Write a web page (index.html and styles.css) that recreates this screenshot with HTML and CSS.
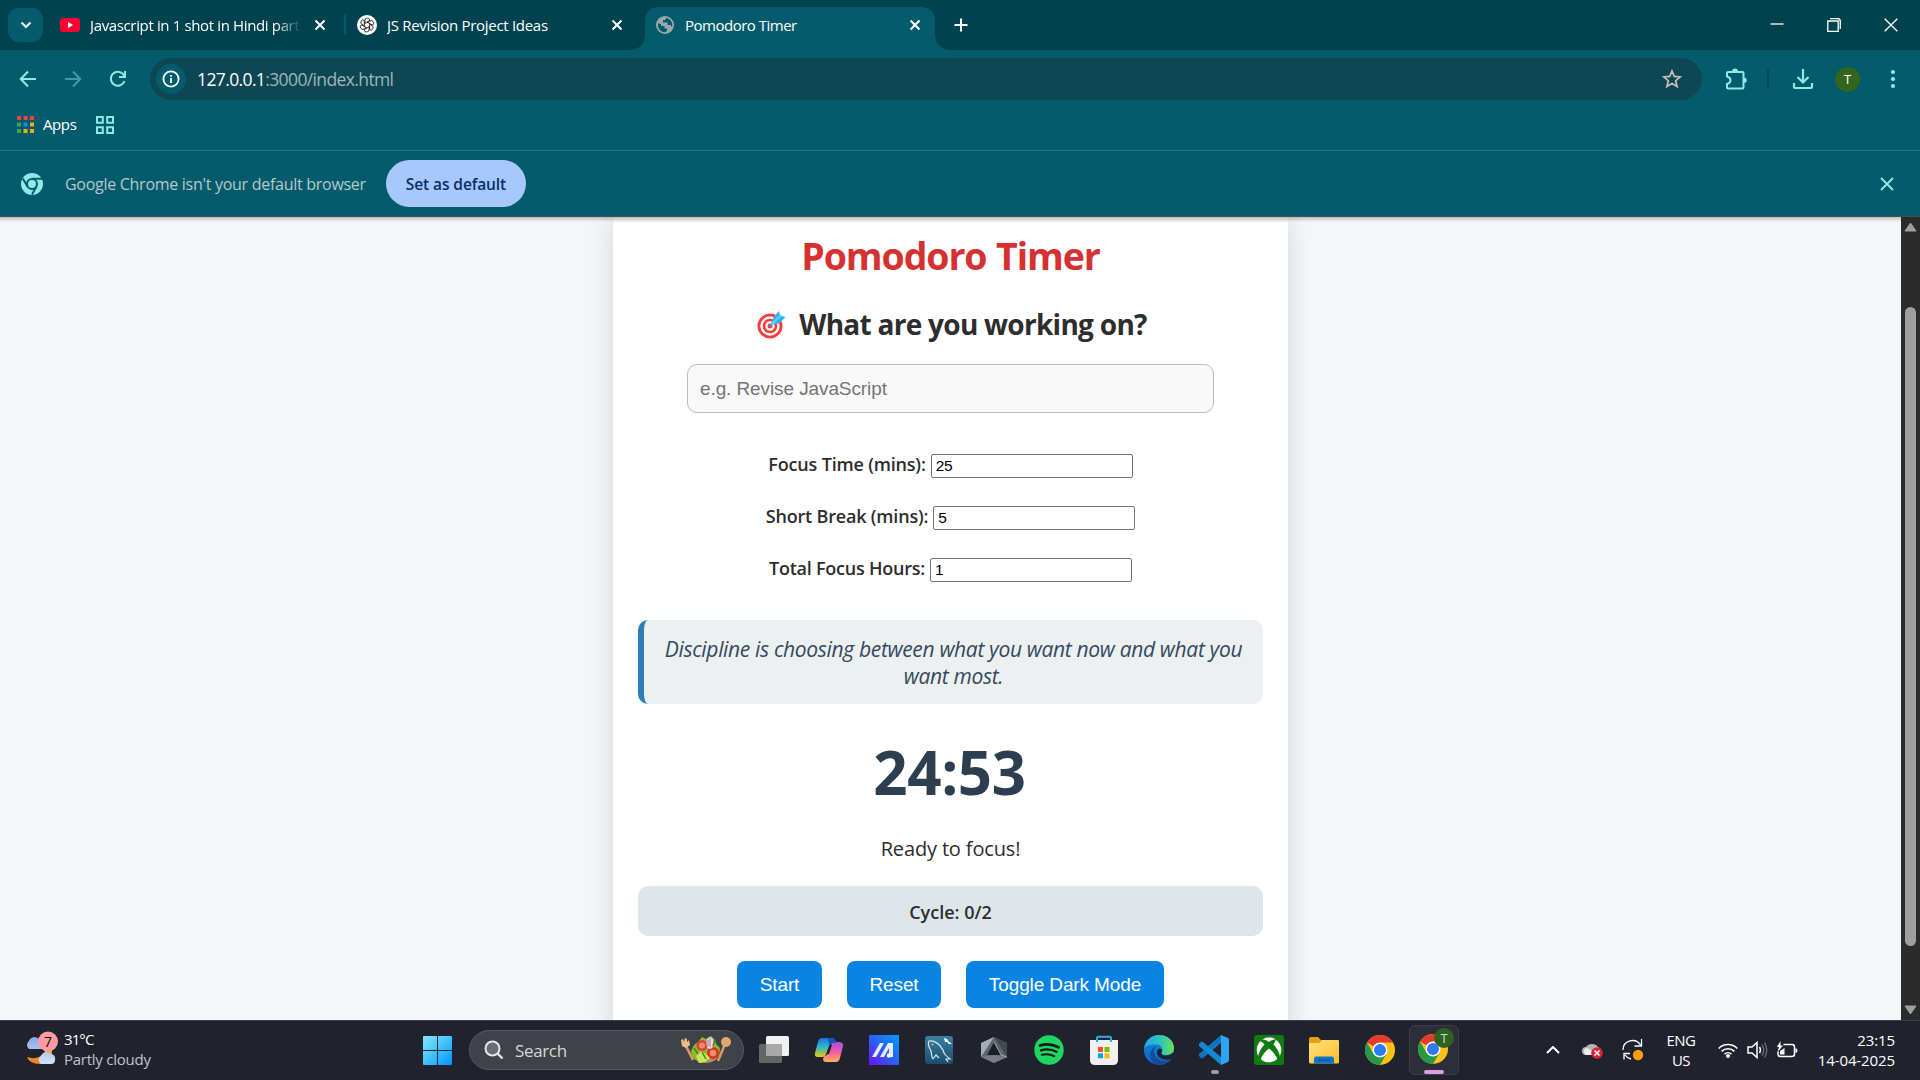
FILE: index.html
```html
<!DOCTYPE html>
<html lang="en">
<head>
<meta charset="utf-8">
<title>Pomodoro Timer</title>
<link rel="stylesheet" href="styles.css">
</head>
<body>
<header class="tabstrip">
  <div class="tab-search"><svg width="12" height="8" viewBox="0 0 12 8"><path d="M1.500 1.500 6 6l4.500-4.500" fill="none" stroke="#fff" stroke-width="2.200"/></svg></div>
  <div class="tab tab-one">
    <svg width="20" height="16" viewBox="0 0 20 16"><rect y="1" width="20" height="14" rx="3.500" fill="#ff0033"/><path d="M8 5v6l5-3z" fill="#fff"/></svg>
    <span class="tab-title fade">Javascript in 1 shot in Hindi part</span>
    <svg class="x" width="12" height="12" viewBox="0 0 12 12"><path d="M1.500 1.500l9 9M10.500 1.500l-9 9"/></svg>
  </div>
  <i class="tab-sep"></i>
  <div class="tab tab-two">
    <svg width="20" height="20" viewBox="0 0 20 20"><circle cx="10" cy="10" r="10" fill="#fff"/><g fill="none" stroke="#222" stroke-width=".85"><g id="petal"><path d="M8 9V5.500Q8 3 10.300 3T13 5.200L8.200 8"/></g><use href="#petal" transform="rotate(60 10 10)"/><use href="#petal" transform="rotate(120 10 10)"/><use href="#petal" transform="rotate(180 10 10)"/><use href="#petal" transform="rotate(240 10 10)"/><use href="#petal" transform="rotate(300 10 10)"/></g></svg>
    <span class="tab-title">JS Revision Project Ideas</span>
    <svg class="x" width="12" height="12" viewBox="0 0 12 12"><path d="M1.500 1.500l9 9M10.500 1.500l-9 9"/></svg>
  </div>
  <div class="tab active">
    <svg width="18" height="18" viewBox="0 0 18 18"><circle cx="9" cy="9" r="9" fill="#9aa8ae"/><path d="M2 7.500c3 0 3.500 1.200 3.200 2.500h3.300v2.500H11V15l-2 1.300C4.500 16.300 1.500 12.500 2 7.500zM9.500 2v2H7v2.500h4.500V9H15v1.500h1.200C17 6 13.500 2 9.500 2z" fill="#035b6c"/></svg>
    <span class="tab-title">Pomodoro Timer</span>
    <svg class="x" width="12" height="12" viewBox="0 0 12 12"><path d="M1.500 1.500l9 9M10.500 1.500l-9 9"/></svg>
  </div>
  <svg class="plus" width="14" height="14" viewBox="0 0 14 14"><path d="M7 .5v13M.5 7h13" stroke="#fff" stroke-width="2"/></svg>
  <div class="win">
    <svg width="14" height="14" viewBox="0 0 14 14"><path d="M.5 6h13"/></svg>
    <svg width="14" height="14" viewBox="0 0 14 14"><path d="M.8 3h10.400v10.300H.8zM3 .6h7.500q2.800 0 2.800 2.800V11"/></svg>
    <svg width="14" height="14" viewBox="0 0 14 14"><path d="M.7.7l12.600 12.600M13.300.7.7 13.300"/></svg>
  </div>
</header>

<nav class="toolbar">
  <svg class="nav" width="18" height="18" viewBox="0 0 18 18"><path d="M17 9H2M9 1.500 1.700 9 9 16.500"/></svg>
  <svg class="nav dim" width="18" height="18" viewBox="0 0 18 18"><path d="M1 9h15M9 1.500 16.300 9 9 16.500"/></svg>
  <svg class="nav" width="18" height="18" viewBox="0 0 18 18"><path d="M15.500 11A7 7 0 1 1 14 4l1.800 2.500M16 1v6h-6"/></svg>
  <div class="omnibox">
    <span class="info"><svg width="18" height="18" viewBox="0 0 18 18"><circle cx="9" cy="9" r="7.600" fill="none" stroke="#fff" stroke-width="1.800"/><path d="M9 8v5M9 5v1.800" stroke="#fff" stroke-width="1.800"/></svg></span>
    <span class="url"><b>127.0.0.1</b>:3000/index.html</span>
    <svg class="star" width="20" height="20" viewBox="0 0 20 20"><path d="M10 2l2.300 5.400 5.900.5-4.500 3.800 1.400 5.800-5.100-3.100-5.100 3.100 1.400-5.800L1.800 7.900l5.900-.5z" fill="none" stroke="#c9bdbd" stroke-width="1.700"/></svg>
  </div>
  <svg class="ext" width="22" height="22" viewBox="0 0 22 22"><path d="M3 4h14.500q1 0 1 1v14.500q0 1-1 1H3q-1 0-1-1V16c2-.5 3.500-1.800 3.500-3.700S4 9 2 8.500V5q0-1 1-1z" fill="none" stroke="#8feae7" stroke-width="2"/><path d="M7 3.500a3 3 0 0 1 6 0zM19 9.500a2.700 2.700 0 0 1 0 5.400z" fill="#8feae7"/></svg>
  <i class="tb-sep"></i>
  <svg class="dl" width="22" height="22" viewBox="0 0 22 22"><path d="M11 1v13M5.500 9l5.500 5.500L16.500 9M2 15v3.500q0 1.500 1.500 1.500h15q1.500 0 1.500-1.500V15" fill="none" stroke="#8feae7" stroke-width="2.200"/></svg>
  <span class="avatar">T</span>
  <svg class="dots" width="6" height="20" viewBox="0 0 6 20"><g fill="#8feae7"><circle cx="3" cy="3" r="2.100"/><circle cx="3" cy="10" r="2.100"/><circle cx="3" cy="17" r="2.100"/></g></svg>
</nav>

<div class="bookmarks">
  <svg width="17" height="17" viewBox="0 0 17 17"><path d="M0 0h4v4H0zM6.500 0h4v4h-4zM13 0h4v4h-4z" fill="#f04438"/><path d="M0 6.500h4v4H0zM0 13h4v4H0z" fill="#34a853"/><path d="M6.500 6.500h4v4h-4z" fill="#1a8cff"/><path d="M13 6.500h4v4h-4zM6.500 13h4v4h-4zM13 13h4v4h-4z" fill="#fbab05"/></svg>
  <span>Apps</span>
  <svg width="18" height="18" viewBox="0 0 18 18"><path d="M1 1h5.800v5.800H1zM11.200 1H17v5.800h-5.800zM1 11.200h5.800V17H1zM11.200 11.200H17V17h-5.800z" fill="none" stroke="#8feae7" stroke-width="2"/></svg>
</div>

<div class="infobar">
  <svg width="22" height="22" viewBox="0 0 22 22"><circle cx="11" cy="11" r="11" fill="#8feae7"/><circle cx="11" cy="11" r="5" fill="none" stroke="#035b6c" stroke-width="2"/><path d="M11 5.700h10M6.500 13.500 1.800 5.500M15.500 13.500 11 21.500" stroke="#035b6c" stroke-width="2"/></svg>
  <span class="msg">Google Chrome isn't your default browser</span>
  <span class="set">Set as default</span>
  <svg class="close" width="14" height="14" viewBox="0 0 14 14"><path d="M1 1l12 12M13 1 1 13" stroke="#8feae7" stroke-width="1.900"/></svg>
</div>

<div class="viewport">
  <div class="page">
    <main class="card">
      <h1>Pomodoro Timer</h1>
      <h2><svg width="29" height="29" viewBox="0 0 29 29"><circle cx="13" cy="16" r="12.500" fill="#fa3c3c"/><circle cx="13" cy="16" r="9.700" fill="#fff"/><circle cx="13" cy="16" r="7.300" fill="#fa3c3c"/><circle cx="13" cy="16" r="4.700" fill="#fff"/><circle cx="13" cy="16" r="2.500" fill="#fa3c3c"/><path d="M13 16 20 8" stroke="#1fb7ea" stroke-width="2"/><path d="M14.500 14.500 16 8l6-7 1 4.500L28.500 7l-6.500 6.500z" fill="#35aef3"/><path d="M15 14l9-9" stroke="#5ad6ff" stroke-width="2"/></svg><span>What are you working on?</span></h2>
      <div class="task">e.g. Revise JavaScript</div>
      <div class="field"><label>Focus Time (mins):</label><span class="num">25</span></div>
      <div class="field"><label>Short Break (mins):</label><span class="num">5</span></div>
      <div class="field hours"><label>Total Focus Hours:</label><span class="num">1</span></div>
      <blockquote><span>Discipline is choosing between what you want now and what you</span><br><span>want most.</span></blockquote>
      <div class="timer">24:53</div>
      <div class="status">Ready to focus!</div>
      <div class="cycle">Cycle: 0/2</div>
      <div class="buttons"><span class="btn b1">Start</span><span class="btn b2">Reset</span><span class="btn b3">Toggle Dark Mode</span></div>
    </main>
  </div>
  <aside class="scroll">
    <svg width="13" height="10" viewBox="0 0 13 10"><path d="M6.500 1 12 9H1z" fill="#9f9f9f" stroke="#9f9f9f" stroke-linejoin="round"/></svg>
    <i class="thumb"></i>
    <svg width="13" height="10" viewBox="0 0 13 10"><path d="M6.500 9 12 1H1z" fill="#9f9f9f" stroke="#9f9f9f" stroke-linejoin="round"/></svg>
  </aside>
</div>

<footer class="taskbar">
  <div class="weather">
    <svg width="36" height="36" viewBox="0 0 36 36"><defs><linearGradient id="cl" x2="0" y2="1"><stop stop-color="#88a8e8"/><stop offset="1" stop-color="#d5e2fa"/></linearGradient><linearGradient id="mn" x2="0" y2="1"><stop stop-color="#fbb829"/><stop offset="1" stop-color="#f0761b"/></linearGradient></defs><path d="M22 17h6v10a13 9 0 0 1-25-1c8 3 17 0 19-9z" fill="url(#mn)"/><path d="M5 18a5 5 0 0 1 0-8 6 6 0 0 1 10-2l4 5v5zM17 33a4.500 4.500 0 0 1 0-8 6 6 0 0 1 10-2q5 1 4 6 0 4-4 4z" fill="url(#cl)"/><circle cx="24" cy="10.500" r="10" fill="#ff9aa2"/><text x="24" y="15.500" text-anchor="middle" font-family="Open Sans, sans-serif" font-size="14" fill="#111">7</text></svg>
    <div class="wtxt"><div class="temp">31°C</div><div class="soft">Partly cloudy</div></div>
  </div>
  <svg class="start" width="29" height="29" viewBox="0 0 29 29"><defs><linearGradient id="win" x2="29" y2="29" gradientUnits="userSpaceOnUse"><stop stop-color="#8be3ff"/><stop offset=".45" stop-color="#45c8fa"/><stop offset="1" stop-color="#0790ff"/></linearGradient></defs><path d="M0 1q0-1 1-1h13v14H0zM15 0h13q1 0 1 1v13H15zM0 15h14v14H1q-1 0-1-1zM15 15h14v13q0 1-1 1H15z" fill="url(#win)"/></svg>
  <div class="search">
    <svg width="20" height="20" viewBox="0 0 20 20"><circle cx="8.500" cy="8.500" r="7" fill="#686c74" stroke="#e6e6e8" stroke-width="2"/><path d="M13.500 13.500 18.500 18.500" stroke="#e6e6e8" stroke-width="2.400"/></svg>
    <span>Search</span>
    <svg class="dish" width="52" height="28" viewBox="0 0 52 28"><path d="M5 8l8 16" stroke="#d69a62" stroke-width="2.600"/><path d="M1 4l2-1 1 3 1-4 2 1v3l2-2 1 5-4 3-4-2z" fill="#f0bd8a"/><path d="M45 8l-7 17" stroke="#d69a62" stroke-width="2.600"/><circle cx="46" cy="6" r="5" fill="#e3a671"/><path d="M14 23q12 8 23 0l2-8H12z" fill="#b98b5e"/><path d="M11 15l3-6 4-3 4-5 4 2 5-3 4 4 1 4 4 4-1 7-5 3-6 2-4 2-5 1-3-4-4-2z" fill="#8db92a"/><circle cx="22" cy="9.500" r="5.500" fill="#dc4535"/><circle cx="33" cy="17" r="6" fill="#d53429"/><circle cx="22" cy="9.500" r="3" fill="#ee8967"/><circle cx="33" cy="17" r="3.200" fill="#f18f70"/><ellipse cx="30" cy="7" rx="3.500" ry="6" fill="#ecd6ec"/><path d="M30 2v9M28 4v6" stroke="#aa70a9"/><path d="M16 20l5-5 5 3 4 4-5 4-6 1z" fill="#c6e75b"/><path d="M14 12l4 6M35 4l-2 6M22 16l4 7" stroke="#527f16" stroke-width="1.500"/></svg>
  </div>
  <div class="apps">
    <span><svg width="30" height="30" viewBox="0 0 30 30"><rect x="7" y="1" width="23" height="20" rx="1.500" fill="#f1f1f1"/><rect x="0" y="9" width="23" height="19" rx="1.500" fill="#656565"/><path d="M7 9h16v12H7z" fill="#a9a9a9"/></svg></span>
    <span><svg width="30" height="30" viewBox="0 0 30 30"><defs><linearGradient id="ca" x2="0" y2="1"><stop stop-color="#1c72dc"/><stop offset=".45" stop-color="#2bb5d3"/><stop offset=".75" stop-color="#8bc550"/><stop offset="1" stop-color="#fdc21e"/></linearGradient><linearGradient id="cb" x2="0" y2="1"><stop stop-color="#a84fe2"/><stop offset=".5" stop-color="#ef5ca6"/><stop offset="1" stop-color="#ffb056"/></linearGradient></defs><path d="M8 3h10q3 0 4 5h-4q-2 0-3 3l-3 8q-1 3-4 3H4q-4 0-3-4L4 7q1-4 4-4z" fill="url(#ca)"/><path d="M22 27H12q-3 0-3-3l1-3q3 0 4-3l3-8q1-3 4-3h5q4 1 3 4l-3 12q-1 4-4 4z" fill="url(#cb)"/><path d="M14 3h4q3 0 4 5h-4q-2 0-3 2z" fill="#1754bd"/><path d="M16 10h2l-3 9h-2z" fill="#20232d"/></svg></span>
    <span><svg width="30" height="30" viewBox="0 0 30 30"><defs><linearGradient id="ar" x1="1" x2="0" y2="1"><stop stop-color="#009dff"/><stop offset=".5" stop-color="#2a60f4"/><stop offset="1" stop-color="#6a10ff"/></linearGradient></defs><path d="M0 0h30v30H0z" fill="url(#ar)"/><path d="M3 22 11 8h4L7 22zM11 22 19 8h5v14h-4V13l-5 9z" fill="#e6edff"/><circle cx="20" cy="20.500" r="2.200" fill="#fff"/></svg></span>
    <span><svg width="28" height="28" viewBox="0 0 28 28"><defs><linearGradient id="my" x2="0" y2="1"><stop stop-color="#3c7fa2"/><stop offset="1" stop-color="#1c4e6c"/></linearGradient></defs><rect width="28" height="28" rx="3" fill="url(#my)"/><path d="M8 23c-2-2-1-4-2-8C3 10 3 7 4 5c5-1 11 3 14 9 1 4 2 5 7 9l-4 0 2 3M8 23l3-4 3 3M7 8l1 1" fill="none" stroke="#d7e7ef" stroke-width="1.200"/><path d="M19 2l3 1 2 3 3 2-3 0-2-2-2 0z" fill="#fff"/></svg></span>
    <span><svg width="28" height="28" viewBox="0 0 28 28"><path d="M14 1 27 7v14l-13 6L1 21V7z" fill="#5f666c"/><path d="M14 1 1 7v14z" fill="#a4adb4"/><path d="M14 1 27 7v14z" fill="#44494e"/><path d="M1 21l13-2 13 2-13 6z" fill="#777d82"/><path d="M14 6l7 13H7z" fill="#1c1f26"/><path d="M14 6l7 13 6 2" fill="none" stroke="#b3b9be" stroke-width=".8"/></svg></span>
    <span><svg width="30" height="30" viewBox="0 0 30 30"><circle cx="15" cy="15" r="14.700" fill="#1ed760"/><g fill="none" stroke="#15191c" stroke-linecap="round"><path d="M6 10.500q9.500-3 18.500 1.800" stroke-width="2.800"/><path d="M7 15.300q8-2.400 15.500 1.500" stroke-width="2.400"/><path d="M7.800 19.800q6.500-1.800 12.500 1.300" stroke-width="2"/></g></svg></span>
    <span><svg width="30" height="30" viewBox="0 0 30 30"><path d="M1 5h28v20q0 5-5 5H6q-5 0-5-5z" fill="#f0f0f0"/><path d="M8 7V3q0-1.200 1.200-1.200h11.600Q22 1.800 22 3v4" fill="none" stroke="#19b4f2" stroke-width="2"/><path d="M9 12h5v5H9z" fill="#f25022"/><path d="M15.500 12h5v5h-5z" fill="#7fba00"/><path d="M9 18.300h5v5H9z" fill="#00a4ef"/><path d="M15.500 18.300h5v5h-5z" fill="#ffb900"/></svg></span>
    <span><svg width="30" height="30" viewBox="0 0 30 30"><defs><linearGradient id="ed"><stop stop-color="#2aa7e6"/><stop offset=".5" stop-color="#29c2c4"/><stop offset="1" stop-color="#6ce34f"/></linearGradient><linearGradient id="ee" x2="0" y2="1"><stop stop-color="#118ad8"/><stop offset="1" stop-color="#0764c5"/></linearGradient></defs><circle cx="15" cy="15" r="15" fill="url(#ee)"/><path d="M0 14C1 5 8 0 15 0c9 0 15 6 15 13 0 5-4 7-8 7-3 0-5-1-4.500-2.500 2-3 .5-8-5.500-8C6 9 1 11 0 14z" fill="url(#ed)"/><path d="M12 11c-5 6 0 15 8 15 4 0 6-1 8-3-4 7-12 8-17 6C4 25 5 14 12 11z" fill="#124c9a"/><path d="M17.500 17.500c-1 2 1 3 4.500 3 3 0 5-1 7.500-3l1 4-2.500 2c-6 3-15 0-15-6 0-3 2-4 3-4 3 1 2.500 3 1.500 4z" fill="#20232d"/></svg></span>
    <span class="run"><svg width="30" height="30" viewBox="0 0 30 30"><path d="M22 0v8L4 23q-1 1-2 0l-2-2q-.7-1 0-2z" fill="#0d76bd"/><path d="M22 30v-8L4 7Q3 6 2 7L0 9q-.7 1 0 2z" fill="#1488d1"/><path d="M22 0l7 3q1 .5 1 2v20q0 1.500-1 2l-7 3z" fill="#30a4ef"/></svg></span>
    <span><svg width="30" height="30" viewBox="0 0 30 30"><rect width="30" height="30" rx="3" fill="#107c10"/><circle cx="15" cy="15" r="12.300" fill="#fff"/><path d="M8 4.500Q12 4 15 7q3-3 7-2.500L19.500 9.500Q25 15 26 22l-2.500 2.500Q21 18 15 13.500 9 18 6.500 24.500L4 22q1-7 6.500-12.500Q8 6 5 6z" fill="#107c10"/><path d="M9 3.300q6-1.500 12 0-3.500.2-6 2-2.500-1.800-6-2z" fill="#fff"/></svg></span>
    <span><svg width="30" height="30" viewBox="0 0 30 30"><defs><linearGradient id="fo" x2="1" y2="1"><stop stop-color="#ffe080"/><stop offset="1" stop-color="#fdbe28"/></linearGradient></defs><path d="M0 4q0-2 2-2h7l3 3h16q2 0 2 2v5H0z" fill="#e6a208"/><path d="M0 8h10l3-3h16q1 0 1 1.500V27q0 1.500-1.500 1.500h-27Q0 28.500 0 27z" fill="url(#fo)"/><path d="M5 28.500V24q0-2.500 2.500-2.500h15Q25 21.500 25 24v4.500z" fill="#1074c7"/><path d="M9 25h12" stroke="#07519b" stroke-width="1.300"/></svg></span>
    <span><svg width="30" height="30" viewBox="0 0 30 30"><g id="chrome"><circle cx="15" cy="15" r="15" fill="#fbc116"/><path d="M15 15 2 7.500A15 15 0 0 1 28 7.500H15z" fill="#e33b2e"/><path d="M2 7.500A15 15 0 0 0 15 30l6.500-11.300L15 15 8.500 18.700z" fill="#269847"/><circle cx="15" cy="15" r="7.500" fill="#fff"/><circle cx="15" cy="15" r="6" fill="#2f7bf2"/></g></svg></span>
    <span class="current"><svg width="38" height="38" viewBox="0 0 38 38"><use href="#chrome" x="0" y="6"/><circle cx="26" cy="10" r="10" fill="#2f621e"/><text x="26" y="14.600" text-anchor="middle" font-family="Open Sans, sans-serif" font-size="13" fill="#cfdcca">T</text></svg></span>
  </div>
  <div class="tray">
    <svg class="up" width="14" height="8" viewBox="0 0 14 8"><path d="M1 7l6-6 6 6" fill="none" stroke="#fff" stroke-width="2"/></svg>
    <svg class="cloud" width="21" height="18" viewBox="0 0 21 18"><path d="M4 14a4 4 0 0 1 0-8 7 6 0 0 1 12 0q3 1 3 4v4z" fill="#b6b6b6"/><path d="M4 14a4 4 0 0 1 0-7q4 0 9 7z" fill="#ededed"/><circle cx="15" cy="12" r="5.800" fill="#e1222e"/><path d="M12.500 9.500l5 5M17.500 9.500l-5 5" stroke="#fff" stroke-width="1.600"/></svg>
    <svg class="sync" width="22" height="22" viewBox="0 0 22 22"><path d="M1 11A9.500 9.500 0 0 1 18.500 6M19.500 0v7h-7M9 20q-4-1-6-4M2 20.500v-6h6" fill="none" stroke="#fff" stroke-width="1.300"/><circle cx="16" cy="16" r="5.200" fill="#ff9d0a"/></svg>
    <div class="lang"><div>ENG</div><div>US</div></div>
    <svg class="wifi" width="20" height="16" viewBox="0 0 20 16"><g fill="none" stroke="#fff" stroke-width="1.500"><path d="M.7 6.500a13 13 0 0 1 18.600 0M3.600 9.400a9 9 0 0 1 12.800 0M6.500 12.200a5 5 0 0 1 7 0"/></g><circle cx="10" cy="14" r="2" fill="#fff"/></svg>
    <svg class="vol" width="21" height="18" viewBox="0 0 21 18"><path d="M1 6h4l5-4.500v15L5 12H1zM12.500 6q1.800 3 0 6" fill="none" stroke="#fff" stroke-width="1.500"/><path d="M15 3.500q3.500 5.500 0 11M17.500 1.500q4.500 7.500 0 15" fill="none" stroke="#6f727a" stroke-width="1.300"/></svg>
    <svg class="bat" width="21" height="18" viewBox="0 0 21 18"><path d="M6.500 3.500h8.500q2.500 0 2.500 2.500v7q0 2.500-2.500 2.500H3.500Q1 15.500 1 13v-2.500" fill="none" stroke="#fff" stroke-width="1.500"/><path d="M18.500 7q2 .5 2 2.500t-2 2.500zM3.500 0 0 6h2L.5 11 6 4.500H3.500zM3 10l4.500-3v6.500H3z" fill="#fff"/></svg>
    <div class="clock"><div>23:15</div><div>14-04-2025</div></div>
  </div>
</footer>
</body>
</html>
```
FILE: styles.css
```css
* { box-sizing: border-box; }
body { margin: 0; width: 1920px; height: 1080px; overflow: hidden; display: flex; flex-direction: column; background: #035b6c; font-family: "Open Sans", "Noto Sans", sans-serif; font-size: 15px; color: #fff; }
svg { display: block; flex: none; }
span { white-space: nowrap; }

.tabstrip { height: 50px; flex: none; display: flex; align-items: center; background: #00434f; padding-left: 8px; }
.tab-search { width: 35px; height: 34px; border-radius: 11px; background: #035b6c; display: grid; place-items: center; }
.tab { display: flex; align-items: center; height: 43px; letter-spacing: -.3px; }
.tab-one { width: 301px; padding: 0 18px 0 17px; }
.tab-title { flex: 1; line-height: 22px; margin-left: 10px; overflow: hidden; }
.fade { -webkit-mask-image: linear-gradient(90deg, #000 88%, transparent); mask-image: linear-gradient(90deg, #000 88%, transparent); margin-right: 13px; letter-spacing: -.36px; }
.x { stroke: #fff; stroke-width: 2; }
.tab-sep { width: 2px; height: 20px; background: #035b6c; }
.tab-two { width: 299px; padding: 0 22px 0 11px; }
.active { width: 290px; height: 43px; align-self: flex-end; background: #035b6c; border-radius: 13px 13px 0 0; padding: 0 14px 7px 11px; position: relative; letter-spacing: -.5px; }
.active .tab-title { margin-left: 11px; }
.active::before, .active::after { content: ""; position: absolute; bottom: 0; width: 14px; height: 14px; }
.active::before { left: -14px; background: radial-gradient(circle at 0 0, transparent 13.5px, #035b6c 14px); }
.active::after { right: -14px; background: radial-gradient(circle at 100% 0, transparent 13.5px, #035b6c 14px); }
.plus { margin-left: 19px; }
.win { margin-left: auto; display: flex; gap: 43px; padding-right: 22px; fill: none; stroke: #fff; stroke-width: 1.3; }

.toolbar { height: 58px; flex: none; display: flex; align-items: center; padding: 0 24px 0 19px; background: #035b6c; }
.nav { fill: none; stroke: #8feae7; stroke-width: 2; margin-right: 27px; }
.dim { opacity: .45; }
.omnibox { width: 1552px; flex: none; height: 42px; border-radius: 21px; background: #0d4754; display: flex; align-items: center; margin-left: -4px; padding: 0 20px 0 6px; }
.info { width: 30px; height: 30px; border-radius: 50%; background: #035b6c; display: grid; place-items: center; }
.url { margin-left: 11px; font-size: 17.5px; letter-spacing: -.62px; color: #9eb5bb; }
.url b { font-weight: 400; color: #fff; }
.star { margin-left: auto; }
.ext { margin-left: 23px; }
.tb-sep { width: 2px; height: 20px; background: #0d4754; margin: 0 23px 0 20px; }
.avatar { width: 25px; height: 25px; flex: none; border-radius: 50%; background: #34651d; font-size: 13px; line-height: 25px; text-align: center; margin-left: 21px; }
.dots { margin-left: auto; }

.bookmarks { height: 42px; flex: none; display: flex; align-items: center; padding: 0 0 9px 17px; }
.bookmarks span { margin: -1px 20px 0 9px; width: 33px; letter-spacing: -.4px; }

.infobar { height: 67px; flex: none; border-top: 1px solid #217584; border-bottom: 1px solid #4b4b50; display: flex; align-items: center; padding: 0 26px 0 21px; }
.msg { margin-left: 22px; width: 301px; color: #b6c8cc; font-size: 16px; letter-spacing: -.28px; }
.set { margin-left: 20px; width: 140px; height: 47px; border-radius: 24px; background: #a8c7fa; color: #062e6f; font-size: 15.5px; display: grid; place-items: center; font-weight: 600; letter-spacing: -.1px; }
.close { margin-left: auto; }

.viewport { height: 803px; flex: none; display: flex; background: #f4f6f8; }
.page { width: 1901px; overflow: hidden; display: flex; justify-content: center; color: #2d2d2d; background: linear-gradient(#bdbdbf, transparent 5px); }
.card { width: 675px; height: 900px; background: #fff; background-image: linear-gradient(#bdbdbf, #fff 6px); box-shadow: 0 0 25px rgba(0,0,0,.13); padding: 12px 25px 0; text-align: center; flex: none; }
.card > * { margin: 0; }
.card h1 { font-size: 37.5px; line-height: 54px; color: #d63031; letter-spacing: -1.1px; word-spacing: 1px; }
.card h2 { font-size: 28px; line-height: 38px; margin-top: 22px; padding-left: 3px; display: flex; align-items: center; justify-content: center; gap: 13px; letter-spacing: -.72px; }
.card .task { width: 527px; height: 49px; margin: 21px auto 0; border: 1px solid #b2bec3; border-radius: 10px; background: #f9f9f9; text-align: left; padding-left: 12px; font: 19px/47px "Liberation Sans", sans-serif; letter-spacing: -.1px; color: #757575; }
.card .field { display: flex; justify-content: center; gap: 5px; height: 25px; margin-top: 27px; font-size: 18px; line-height: 20px; font-weight: 600; letter-spacing: -.18px; }
.card .hours { letter-spacing: -.23px; }
.card .task + .field { margin-top: 41px; }
.num { width: 202px; height: 24px; border: 1px solid #767676; border-radius: 2px; text-align: left; padding-left: 4px; font: 400 15.5px/21px "Liberation Sans", sans-serif; letter-spacing: -.2px; color: #000; }
.card blockquote { height: 84px; margin-top: 37px; border-left: 6px solid #2980b9; border-radius: 10px; background: #ecf0f1; padding-top: 16px; font-size: 21px; line-height: 27px; letter-spacing: -.33px; font-style: italic; color: #34495e; }
.card .timer { margin-top: 27px; font-size: 60px; line-height: 82px; font-weight: 700; letter-spacing: -.4px; padding-right: 2px; color: #2c3e50; }
.card .status { margin-top: 22px; font-size: 20px; line-height: 28px; letter-spacing: -.15px; }
.card .cycle { margin-top: 23px; height: 50px; border-radius: 10px; background: #dfe6e9; font-size: 18px; line-height: 52px; font-weight: 600; }
.card .buttons { display: flex; justify-content: center; gap: 25px; margin-top: 25px; }
.btn { height: 47px; border-radius: 8px; background: #0984e3; color: #fff; font: 19px/47px "Liberation Sans", sans-serif; letter-spacing: -.12px; }
.b1 { width: 85px; }
.b2 { width: 94px; }
.b3 { width: 198px; }
.scroll { width: 19px; background: #2b2b2b; display: flex; flex-direction: column; align-items: center; padding: 5px 0; }
.thumb { width: 11px; height: 639px; border-radius: 6px; background: #9f9f9f; margin: 75px 0 59px; }

.taskbar { height: 60px; flex: none; display: flex; align-items: center; background: #20232d; border-top: 1px solid #3b3e46; padding-bottom: 1px; font-size: 15px; }
.weather { width: 423px; padding-left: 24px; display: flex; gap: 4px; }
.wtxt { margin-top: -2px; }
.wtxt, .lang, .clock { line-height: 20px; }
.temp { letter-spacing: -.9px; }
.soft { color: #c3c4c8; letter-spacing: -.25px; }
.search { width: 275px; height: 40px; border: 1px solid #575a62; border-radius: 20px; background: #3f4249; margin-left: 17px; display: flex; align-items: center; padding: 0 11px 0 14px; font-size: 17px; letter-spacing: -.35px; color: #d6d7d9; }
.search > span { margin-left: 11px; }
.dish { margin-left: auto; }
.apps { display: flex; margin-left: 2px; }
.apps > span { width: 55.1px; height: 50px; display: grid; place-items: center; position: relative; }
.run::after, .current::after { content: ""; position: absolute; left: 24px; bottom: 1px; width: 8px; height: 4px; border-radius: 2px; background: #9c9da1; }
.apps .current { width: 50px; margin-left: 2px; border: 1px solid #3b3e47; border-radius: 6px; background: #2c2f39; }
.current svg { margin: -6px 0 0 5px; }
.current::after { left: 14px; bottom: 0; width: 20px; background: #dc9fe4; }
.tray { margin-left: auto; display: flex; align-items: center; padding-right: 25px; }
.cloud { margin-left: 22px; }
.sync { margin-left: 19px; }
.lang { width: 40px; margin-left: 17px; text-align: center; letter-spacing: -.5px; }
.wifi { margin-left: 17px; }
.vol { margin-left: 9px; }
.bat { margin-left: 9px; }
.clock { margin-left: 19px; width: 78px; display: flex; flex-direction: column; align-items: flex-end; letter-spacing: -.1px; margin-top: -1px; }
```
